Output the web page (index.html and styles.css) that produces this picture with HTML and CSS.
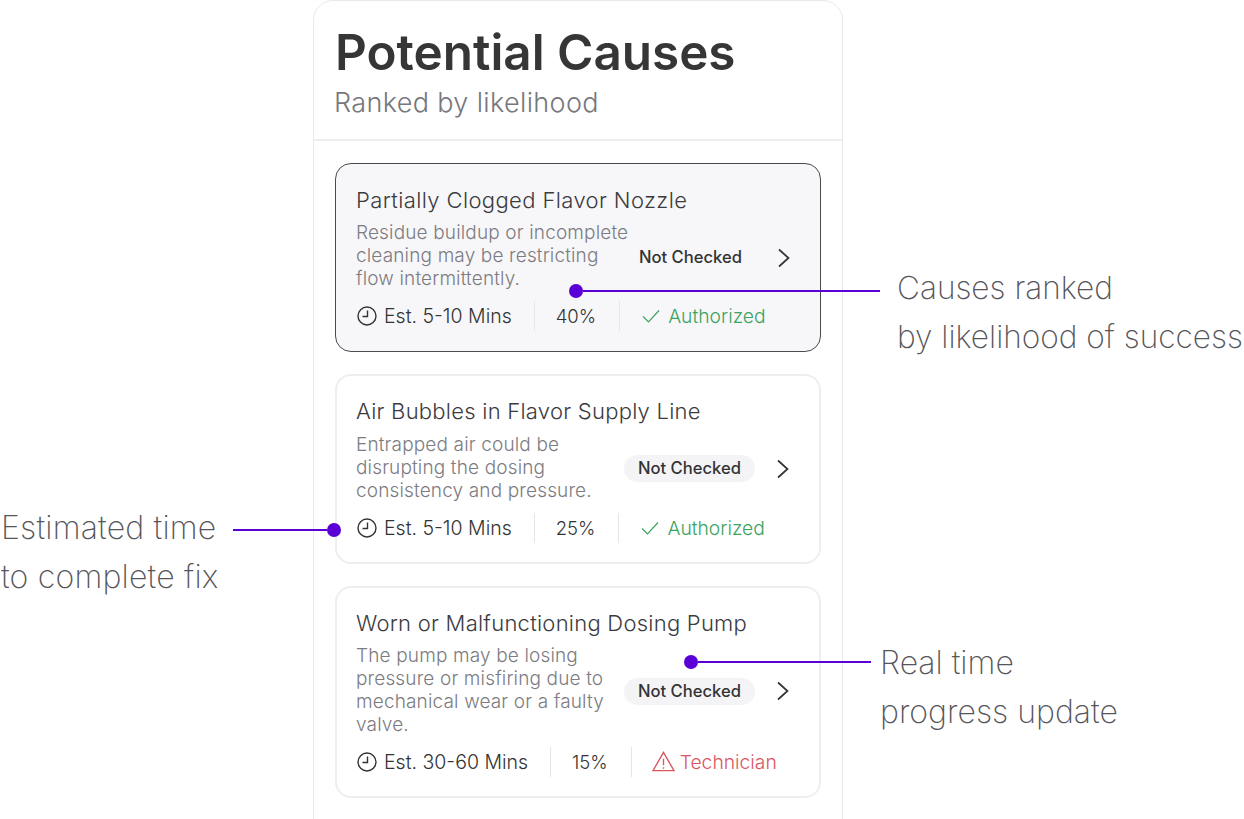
FILE: index.html
```html
<!DOCTYPE html>
<html>
  <head>
    <meta charset="UTF-8">
    <title>Potential Causes</title>
    <link rel="stylesheet" href="styles.css">
  </head>
  <body>
    <section class="panel">
      <header class="panel-head">
        <h1>Potential Causes</h1>
        <p>Ranked by likelihood</p>
      </header>
      <div class="cause-list">
        <article class="cause cause-active">
          <h2>Partially Clogged Flavor Nozzle</h2>
          <div class="cause-mid">
            <p class="desc">Residue buildup or incomplete cleaning may be restricting flow intermittently.</p>
            <span class="status status-plain">Not Checked</span>
            <svg class="chevron" viewBox="0 0 14 20"><path d="M2 1.5 11.5 10 2 18.5"/></svg>
          </div>
          <div class="meta">
            <span class="time">
              <svg class="clock" viewBox="0 0 20 20"><circle cx="10" cy="10" r="9"/><path d="M10.5 4.5v6h-5"/></svg>
              Est. 5-10 Mins
            </span>
            <span class="pct">40%</span>
            <span class="auth">
              <svg class="check" viewBox="0 0 18 14"><path d="M1 7.5 6.5 13 17 1.5"/></svg>
              Authorized
            </span>
          </div>
        </article>
        <article class="cause">
          <h2>Air Bubbles in Flavor Supply Line</h2>
          <div class="cause-mid">
            <p class="desc">Entrapped air could be disrupting the dosing consistency and pressure.</p>
            <span class="status">Not Checked</span>
            <svg class="chevron" viewBox="0 0 14 20"><path d="M2 1.5 11.5 10 2 18.5"/></svg>
          </div>
          <div class="meta">
            <span class="time">
              <svg class="clock" viewBox="0 0 20 20"><circle cx="10" cy="10" r="9"/><path d="M10.5 4.5v6h-5"/></svg>
              Est. 5-10 Mins
            </span>
            <span class="pct">25%</span>
            <span class="auth">
              <svg class="check" viewBox="0 0 18 14"><path d="M1 7.5 6.5 13 17 1.5"/></svg>
              Authorized
            </span>
          </div>
        </article>
        <article class="cause">
          <h2>Worn or Malfunctioning Dosing Pump</h2>
          <div class="cause-mid">
            <p class="desc">The pump may be losing pressure or misfiring due to mechanical wear or a faulty valve.</p>
            <span class="status">Not Checked</span>
            <svg class="chevron" viewBox="0 0 14 20"><path d="M2 1.5 11.5 10 2 18.5"/></svg>
          </div>
          <div class="meta">
            <span class="time">
              <svg class="clock" viewBox="0 0 20 20"><circle cx="10" cy="10" r="9"/><path d="M10.5 4.5v6h-5"/></svg>
              Est. 30-60 Mins
            </span>
            <span class="pct">15%</span>
            <span class="tech">
              <svg class="warn" viewBox="0 0 24 22"><path d="M12 1.5 23 20.5H1Z"/><path d="M12 8v7M12 17v1.5"/></svg>
              Technician
            </span>
          </div>
        </article>
      </div>
    </section>

    <div class="note note-causes">
      <div class="leader"><span class="dot"></span><span class="line"></span></div>
      <p>Causes ranked<br>by likelihood of success</p>
    </div>
    <div class="note note-time">
      <p>Estimated time<br>to complete fix</p>
      <div class="leader"><span class="line"></span><span class="dot"></span></div>
    </div>
    <div class="note note-progress">
      <div class="leader"><span class="dot"></span><span class="line"></span></div>
      <p>Real time<br>progress update</p>
    </div>
  </body>
</html>
```

FILE: styles.css
```css
html {
  font-family: Inter, "Noto Sans", sans-serif;
}
body {
  margin: 0;
  height: 819px;
  overflow: hidden;
  background: #fff;
  position: relative;
}
p, h1, h2 {
  margin: 0;
}

.panel {
  margin-left: 313px;
  width: 530px;
  height: 840px;
  box-sizing: border-box;
  border: 1px solid #e9e9ec;
  border-radius: 20px;
}
.panel-head {
  padding: 21px 20px 20px;
  border-bottom: 2px solid #eeeef0;
  height: 140px;
  box-sizing: border-box;
}
.panel-head h1 {
  margin-left: 1px;
  font-size: 49.4px;
  line-height: 60px;
  font-weight: 600;
  color: #363636;
}
.panel-head p {
  margin-top: 4px;
  font-size: 27px;
  line-height: 34px;
  font-weight: 300;
  letter-spacing: 0.35px;
  color: #77777d;
}

.cause-list {
  padding: 22px 21px 0;
  display: flex;
  flex-direction: column;
  gap: 22px;
}
.cause {
  border: 2px solid #eeeef0;
  border-radius: 16px;
  padding: 21px 0 0 19px;
  display: flex;
  flex-direction: column;
  background: #fff;
  box-sizing: border-box;
  height: 190px;
}
.cause:last-child {
  height: 212px;
}
.cause-active {
  height: 189px;
  border: 1.5px solid #4a4a4e;
  background: #f7f7f9;
  padding: 22px 0 0 20px;
}
.cause h2 {
  font-size: 22px;
  line-height: 28px;
  font-weight: 350;
  letter-spacing: 0.25px;
  color: #3b3b3f;
}
.cause-active h2 {
  letter-spacing: 0.38px;
}
.cause-mid {
  margin-top: 7px;
  display: flex;
  align-items: center;
}
.cause:nth-child(2) .cause-mid {
  margin-top: 8px;
}
.desc {
  flex: none;
  width: 276px;
  margin-right: -20px;
  font-size: 19px;
  line-height: 23px;
  font-weight: 300;
  letter-spacing: 0.15px;
  color: #7c7c82;
}
.status {
  margin: 2px 21px 0 auto;
  padding: 0 14px;
  height: 27px;
  line-height: 27px;
  border-radius: 14px;
  background: #f4f4f6;
  font-size: 16.6px;
  font-weight: 500;
  white-space: nowrap;
  color: #333;
}
.status-plain {
  background: none;
}
.cause-active .status,
.cause-active .chevron {
  margin-top: 4px;
}
.chevron {
  width: 14px;
  height: 20px;
  margin-top: 2px;
  margin-right: 29px;
  fill: none;
  stroke: #333;
  stroke-width: 1.7;
}

.meta {
  margin-top: 11px;
  display: flex;
  align-items: center;
  font-size: 19.5px;
  line-height: 30px;
  font-weight: 300;
  color: #333;
}
.meta > span {
  display: flex;
  align-items: center;
}
.time {
  gap: 7px;
  padding: 0 22px 0 1px;
}
.pct {
  border-left: 1px solid #e6e6ea;
  border-right: 1px solid #e6e6ea;
  padding: 0 23px 0 21px;
  font-size: 18.5px;
}
.auth {
  gap: 8px;
  padding-left: 22px;
  font-size: 19.3px;
  color: #3aa35f;
}
.tech {
  gap: 5px;
  padding-left: 20px;
  font-size: 19.3px;
  color: #d9565f;
}
.clock {
  width: 20px;
  height: 20px;
  fill: none;
  stroke: #333;
  stroke-width: 1.4;
}
.check {
  width: 18px;
  height: 14px;
  fill: none;
  stroke: #3aa35f;
  stroke-width: 1.2;
}
.warn {
  width: 23px;
  height: 21px;
  margin-top: -2px;
  fill: none;
  stroke: #d9565f;
  stroke-width: 1.4;
}

/* callouts sit on top of the panel */
.note {
  position: absolute;
  display: flex;
  align-items: flex-start;
  font-size: 32px;
  line-height: 49px;
  font-weight: 250;
  white-space: nowrap;
  color: #55555a;
}
.leader {
  display: flex;
  align-items: center;
  height: 14px;
}
.dot {
  width: 14px;
  height: 14px;
  border-radius: 50%;
  background: #5a00d6;
  flex: none;
}
.line {
  height: 2px;
  background: #5a00d6;
  flex: none;
}
.note-causes {
  left: 569px;
  top: 263px;
  font-size: 31.6px;
}
.note-causes .leader {
  margin-top: 21px;
}
.note-causes .line {
  width: 297px;
}
.note-causes p {
  margin-left: 17px;
}
.note-time {
  left: 1px;
  top: 503px;
  letter-spacing: 0.2px;
}
.note-time .leader {
  margin: 20px 0 0 15px;
}
.note-time .line {
  width: 94px;
}
.note-progress {
  left: 684px;
  top: 638px;
}
.note-progress .leader {
  margin-top: 17px;
}
.note-progress .line {
  width: 173px;
}
.note-progress p {
  margin-left: 9px;
}
```
